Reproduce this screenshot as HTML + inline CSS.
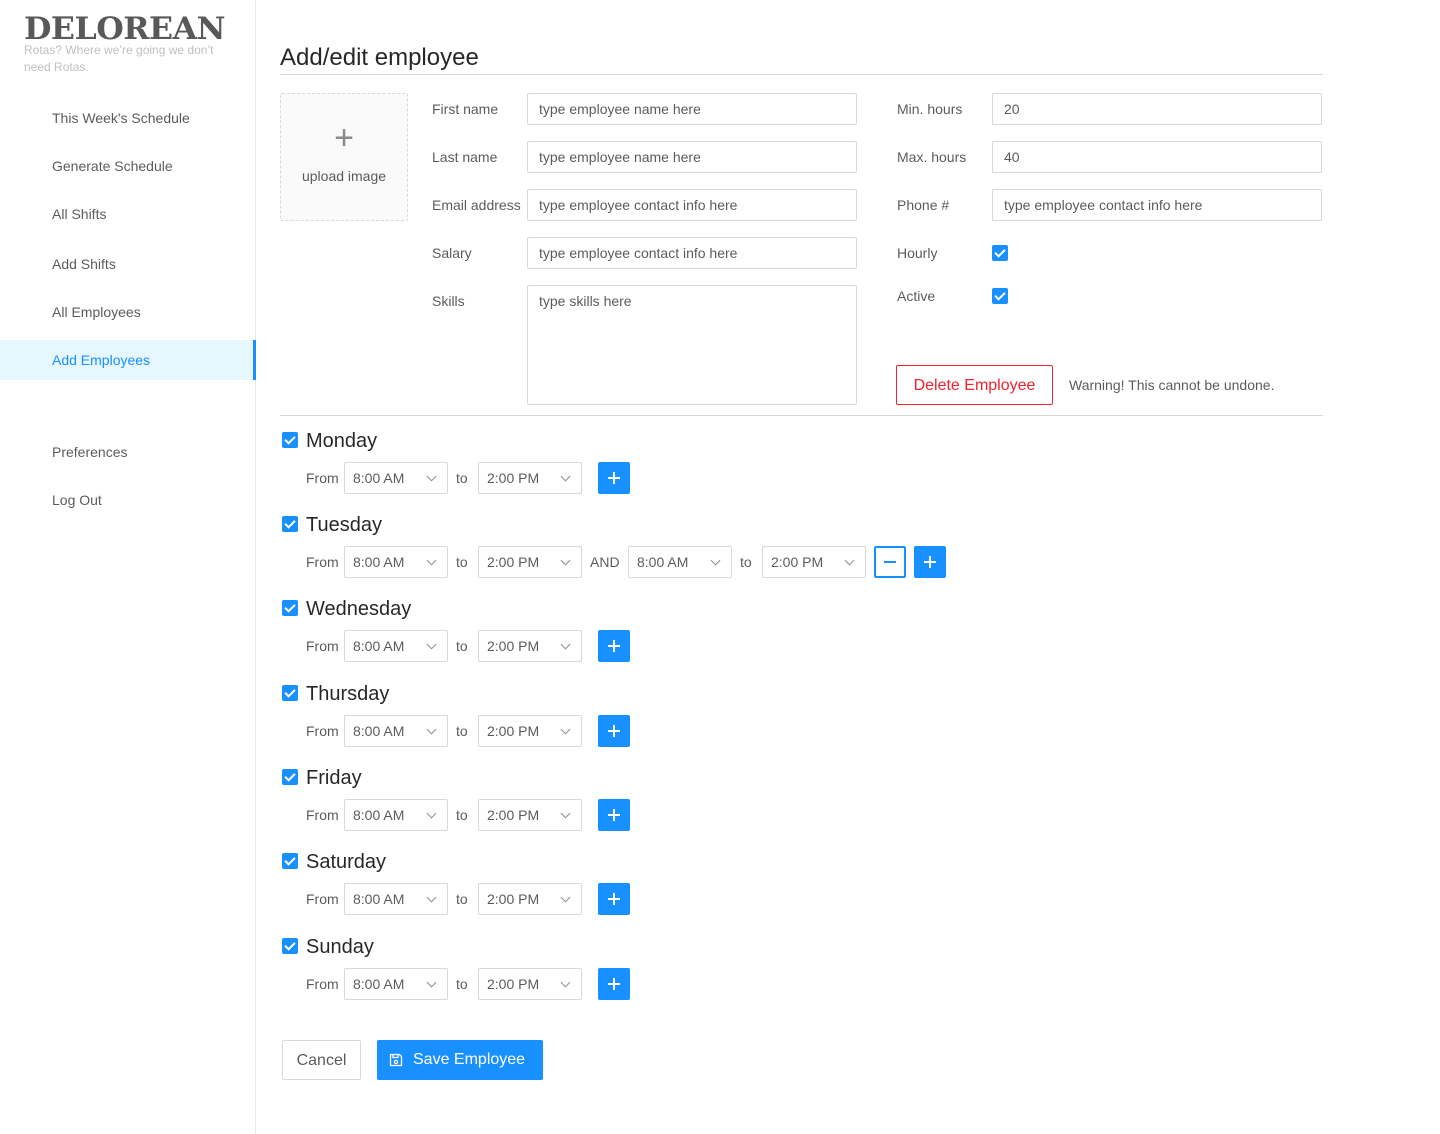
<!DOCTYPE html>
<html><head><style>
*{box-sizing:border-box;margin:0;padding:0}
body{width:1440px;height:1134px;position:relative;background:#fff;font-family:"Liberation Sans",sans-serif;color:rgba(0,0,0,.65);font-size:14px;overflow:hidden}
.a{position:absolute}
.side{left:0;top:0;width:256px;height:1134px;border-right:1px solid #e8e8e8}
.nav{left:52px;font-size:14px;color:rgba(0,0,0,.65)}
.inp{position:absolute;border:1px solid #d9d9d9;border-radius:2px;height:32px;padding:6px 11px;font-size:14px;color:rgba(0,0,0,.65);line-height:18px}
.lbl{position:absolute;font-size:14px;line-height:18px}
.cb{position:absolute;width:16px;height:16px;background:#1890ff;border-radius:2px}
.cb:after{content:"";position:absolute;left:5px;top:2px;width:4px;height:8px;border:solid #fff;border-width:0 2px 2px 0;transform:rotate(45deg)}
.sel{position:absolute;width:104px;height:32px;border:1px solid #d9d9d9;border-radius:2px;padding:7px 8px;font-size:14px;line-height:16px;color:rgba(0,0,0,.65)}
.sel:after{content:"";position:absolute;right:12px;top:10px;width:6px;height:6px;border:solid rgba(0,0,0,.45);border-width:0 1px 1px 0;transform:rotate(45deg)}
.pb{position:absolute;width:32px;height:32px;background:#1890ff;border-radius:2px}
.pb:before{content:"";position:absolute;left:10px;top:15px;width:12px;height:2px;background:#fff}
.pb:after{content:"";position:absolute;left:15px;top:10px;width:2px;height:12px;background:#fff}
.mb{position:absolute;width:32px;height:32px;border:2px solid #1890ff;border-radius:2px;background:#fff}
.mb:before{content:"";position:absolute;left:8px;top:13px;width:12px;height:2px;background:#1890ff}
.day{position:absolute;left:306px;font-size:20px;color:rgba(0,0,0,.85);line-height:24px}
</style></head><body>
<div class="a side"></div>
<div class="a" style="left:24px;top:9px;font-family:'DejaVu Serif','Liberation Serif',serif;font-weight:bold;font-size:31px;color:#595959;letter-spacing:-0.5px;line-height:40px;transform:scaleX(1.02);transform-origin:left">DELOREAN</div>
<div class="a" style="left:24px;top:42px;width:210px;font-size:12px;line-height:17px;color:#bfbfbf">Rotas? Where we’re going we don’t need Rotas.</div>
<div class="a nav" style="top:110px">This Week's Schedule</div>
<div class="a nav" style="top:158px">Generate Schedule</div>
<div class="a nav" style="top:206px">All Shifts</div>
<div class="a nav" style="top:256px">Add Shifts</div>
<div class="a nav" style="top:304px">All Employees</div>
<div class="a" style="left:0;top:340px;width:256px;height:40px;background:#e6f7ff;border-right:3px solid #1890ff"></div>
<div class="a nav" style="top:352px;color:#1890ff">Add Employees</div>
<div class="a nav" style="top:444px">Preferences</div>
<div class="a nav" style="top:492px">Log Out</div>

<div class="a" style="left:280px;top:43px;font-size:24px;color:rgba(0,0,0,.85);line-height:30px">Add/edit employee</div>
<div class="a" style="left:280px;top:74px;width:1043px;height:1px;background:#d9d9d9"></div>

<div class="a" style="left:280px;top:93px;width:128px;height:128px;border:1px dashed #d9d9d9;background:#fafafa;border-radius:2px;text-align:center">
<div style="font-size:34px;font-weight:200;color:rgba(0,0,0,.45);margin-top:24px;line-height:40px">+</div>
<div style="margin-top:10px;color:rgba(0,0,0,.65)">upload image</div></div>

<div class="lbl" style="left:432px;top:100px">First name</div>
<div class="lbl" style="left:432px;top:148px">Last name</div>
<div class="lbl" style="left:432px;top:196px">Email address</div>
<div class="lbl" style="left:432px;top:244px">Salary</div>
<div class="lbl" style="left:432px;top:292px">Skills</div>
<div class="inp" style="left:527px;top:93px;width:330px">type employee name here</div>
<div class="inp" style="left:527px;top:141px;width:330px">type employee name here</div>
<div class="inp" style="left:527px;top:189px;width:330px">type employee contact info here</div>
<div class="inp" style="left:527px;top:237px;width:330px">type employee contact info here</div>
<div class="inp" style="left:527px;top:285px;width:330px;height:120px">type skills here</div>

<div class="lbl" style="left:897px;top:100px">Min. hours</div>
<div class="lbl" style="left:897px;top:148px">Max. hours</div>
<div class="lbl" style="left:897px;top:196px">Phone #</div>
<div class="lbl" style="left:897px;top:244px">Hourly</div>
<div class="lbl" style="left:897px;top:287px">Active</div>
<div class="inp" style="left:992px;top:93px;width:330px">20</div>
<div class="inp" style="left:992px;top:141px;width:330px">40</div>
<div class="inp" style="left:992px;top:189px;width:330px">type employee contact info here</div>
<div class="cb" style="left:992px;top:245px"></div>
<div class="cb" style="left:992px;top:288px"></div>
<div class="a" style="left:896px;top:365px;width:157px;height:40px;border:1px solid #f5222d;border-radius:2px;color:#f5222d;font-size:16px;text-align:center;line-height:40px">Delete Employee</div>
<div class="lbl" style="left:1069px;top:376px">Warning! This cannot be undone.</div>
<div class="a" style="left:280px;top:415px;width:1043px;height:1px;background:#d9d9d9"></div>

<div class="cb" style="left:282px;top:432px"></div><div class="day" style="top:429px">Monday</div>
<div class="cb" style="left:282px;top:516px"></div><div class="day" style="top:513px">Tuesday</div>
<div class="cb" style="left:282px;top:600px"></div><div class="day" style="top:597px">Wednesday</div>
<div class="cb" style="left:282px;top:685px"></div><div class="day" style="top:682px">Thursday</div>
<div class="cb" style="left:282px;top:769px"></div><div class="day" style="top:766px">Friday</div>
<div class="cb" style="left:282px;top:853px"></div><div class="day" style="top:850px">Saturday</div>
<div class="cb" style="left:282px;top:938px"></div><div class="day" style="top:935px">Sunday</div>

<div class="lbl" style="left:306px;top:469px">From</div><div class="sel" style="left:344px;top:462px">8:00 AM</div><div class="lbl" style="left:456px;top:469px">to</div><div class="sel" style="left:478px;top:462px">2:00 PM</div><div class="pb" style="left:598px;top:462px"></div>

<div class="lbl" style="left:306px;top:553px">From</div><div class="sel" style="left:344px;top:546px">8:00 AM</div><div class="lbl" style="left:456px;top:553px">to</div><div class="sel" style="left:478px;top:546px">2:00 PM</div>
<div class="lbl" style="left:590px;top:553px">AND</div><div class="sel" style="left:628px;top:546px">8:00 AM</div><div class="lbl" style="left:740px;top:553px">to</div><div class="sel" style="left:762px;top:546px">2:00 PM</div>
<div class="mb" style="left:874px;top:546px"></div><div class="pb" style="left:914px;top:546px"></div>

<div class="lbl" style="left:306px;top:637px">From</div><div class="sel" style="left:344px;top:630px">8:00 AM</div><div class="lbl" style="left:456px;top:637px">to</div><div class="sel" style="left:478px;top:630px">2:00 PM</div><div class="pb" style="left:598px;top:630px"></div>
<div class="lbl" style="left:306px;top:722px">From</div><div class="sel" style="left:344px;top:715px">8:00 AM</div><div class="lbl" style="left:456px;top:722px">to</div><div class="sel" style="left:478px;top:715px">2:00 PM</div><div class="pb" style="left:598px;top:715px"></div>
<div class="lbl" style="left:306px;top:806px">From</div><div class="sel" style="left:344px;top:799px">8:00 AM</div><div class="lbl" style="left:456px;top:806px">to</div><div class="sel" style="left:478px;top:799px">2:00 PM</div><div class="pb" style="left:598px;top:799px"></div>
<div class="lbl" style="left:306px;top:890px">From</div><div class="sel" style="left:344px;top:883px">8:00 AM</div><div class="lbl" style="left:456px;top:890px">to</div><div class="sel" style="left:478px;top:883px">2:00 PM</div><div class="pb" style="left:598px;top:883px"></div>
<div class="lbl" style="left:306px;top:975px">From</div><div class="sel" style="left:344px;top:968px">8:00 AM</div><div class="lbl" style="left:456px;top:975px">to</div><div class="sel" style="left:478px;top:968px">2:00 PM</div><div class="pb" style="left:598px;top:968px"></div>

<div class="a" style="left:282px;top:1040px;width:79px;height:40px;border:1px solid #d9d9d9;border-radius:2px;font-size:16px;text-align:center;line-height:40px">Cancel</div>
<div class="a" style="left:377px;top:1040px;width:166px;height:40px;background:#1890ff;border-radius:2px;color:#fff;font-size:16px;line-height:40px;padding-left:36px">Save Employee</div>
<svg class="a" style="left:389px;top:1053px" width="14" height="14" viewBox="0 0 14 14" fill="none" stroke="#fff" stroke-width="1.3"><path d="M1.5 1.5h9l2 2v9h-11z"/><path d="M4 1.5v3h5v-3"/><circle cx="7" cy="9" r="1.6"/></svg>
</body></html>
